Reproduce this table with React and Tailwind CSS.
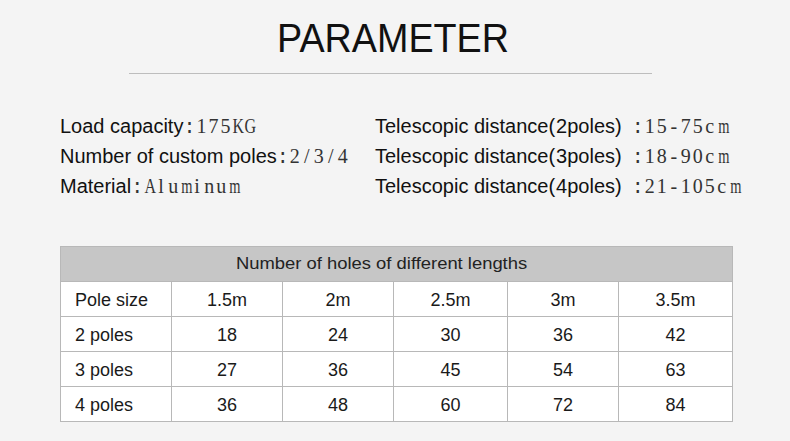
const WIDE = { m: "scale-x-[0.72]", K: "scale-x-[0.8]", G: "scale-x-[0.8]", A: "scale-x-[0.8]" };

function Mono({ text }) {
  return (
    <span className="font-['Liberation_Serif',serif] text-[20px] text-[#333]">
      {text.split("").map((ch, i) => (
        <span key={i} className="inline-block w-[12px] text-center">
          {WIDE[ch] ? <span className={`inline-block ${WIDE[ch]}`}>{ch}</span> : ch}
        </span>
      ))}
    </span>
  );
}

export default function App() {
  const rows = [
    ["Pole size", "1.5m", "2m", "2.5m", "3m", "3.5m"],
    ["2 poles", "18", "24", "30", "36", "42"],
    ["3 poles", "27", "36", "45", "54", "63"],
    ["4 poles", "36", "48", "60", "72", "84"],
  ];
  const cols = "grid grid-cols-[110px_111px_111px_114px_111px_114px]";
  const left = [
    ["Load capacity", "175KG"],
    ["Number of custom poles", "2/3/4"],
    ["Material", "Aluminum"],
  ];
  const right = [
    ["2poles", "15-75cm"],
    ["3poles", "18-90cm"],
    ["4poles", "21-105cm"],
  ];
  return (
    <div className="w-[790px] h-[441px] bg-[#f4f4f4] overflow-hidden font-['Liberation_Sans',Arial,sans-serif] text-[#111]">
      <div className="flex justify-center pt-[18px] pr-[3px]">
        <span className="inline-block text-[41px] leading-none scale-x-[0.92]">PARAMETER</span>
      </div>
      <div className="mt-[14px] ml-[129px] w-[523px] h-px bg-[#bdbdbd]" />
      <div className="mt-[37px] flex text-[20px]">
        <div className="ml-[60px] w-[315px]">
          {left.map(([l, v]) => (
            <div key={l} className="h-[30px] leading-[30px] whitespace-nowrap">
              {l}
              <span className="inline-block w-[12px] text-center font-['Liberation_Mono',monospace] text-[20px] text-[#333]">:</span>
              <Mono text={v} />
            </div>
          ))}
        </div>
        <div>
          {right.map(([p, v]) => (
            <div key={p} className="h-[30px] leading-[30px] whitespace-nowrap">
              Telescopic distance
              <span>(</span>
              <span className="ml-[1px]">{p}</span>)
              <span className="ml-[10px] inline-block w-[12px] text-center font-['Liberation_Mono',monospace] text-[20px] text-[#333]">:</span>
              <Mono text={v} />
            </div>
          ))}
        </div>
      </div>
      <div className="mt-[45px] ml-[60px] w-[673px] border border-[#b8b8b8] bg-white text-[18px] text-[#1a1a1a]">
        <div className="h-[34px] bg-[#c6c6c6] flex items-center pl-[175px]">
          <span className="inline-block origin-left scale-x-[1.15] text-[16px] text-[#222]">
            Number of holes of different lengths
          </span>
        </div>
        {rows.map((r, i) => (
          <div key={i} className={`${cols} h-[35px] border-t border-[#b8b8b8]`}>
            {r.map((c, j) => (
              <div
                key={j}
                className={
                  j === 0
                    ? "flex items-center pl-[14px] pt-[2px]"
                    : "flex items-center justify-center pt-[2px] border-l border-[#b8b8b8]"
                }
              >
                {c}
              </div>
            ))}
          </div>
        ))}
      </div>
    </div>
  );
}
